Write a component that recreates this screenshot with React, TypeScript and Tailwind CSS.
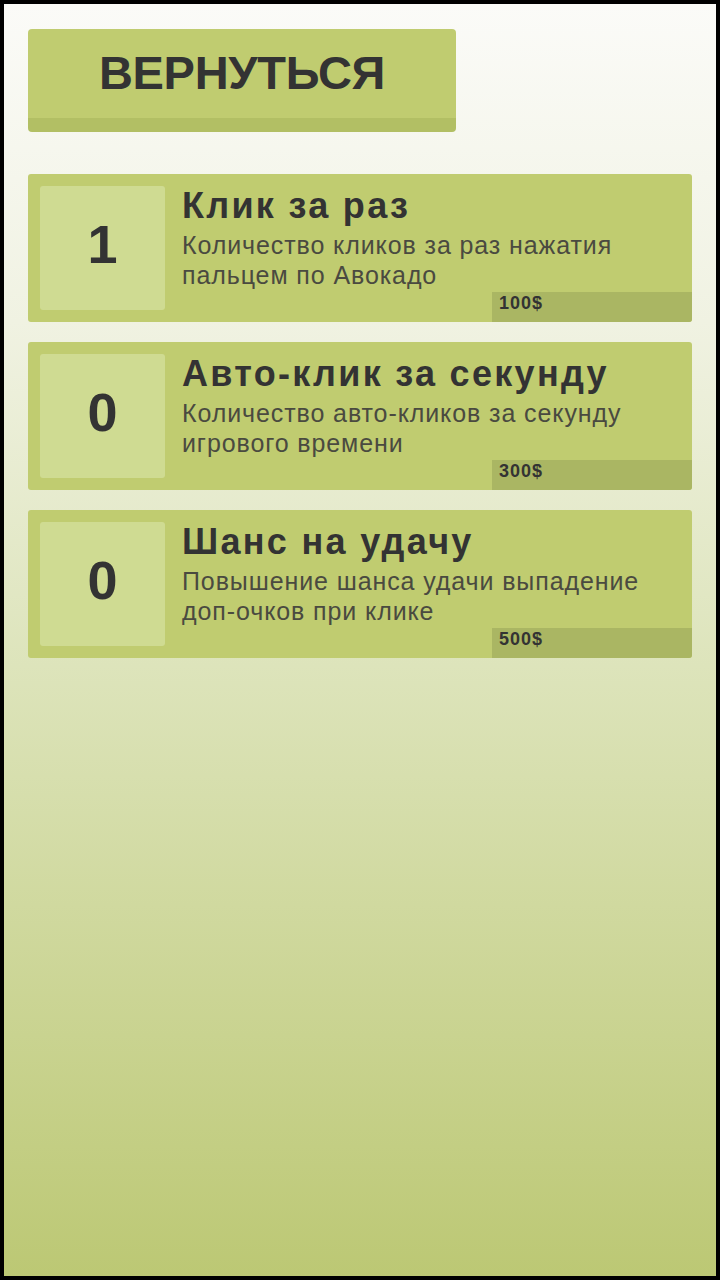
const UPGRADES = [
  {
    level: 1,
    title: "Клик за раз",
    text: "Количество кликов за раз нажатия пальцем по Авокадо",
    price: "100$",
  },
  {
    level: 0,
    title: "Авто-клик за секунду",
    text: "Количество авто-кликов за секунду игрового времени",
    price: "300$",
  },
  {
    level: 0,
    title: "Шанс на удачу",
    text: "Повышение шанса удачи выпадение доп-очков при клике",
    price: "500$",
  },
];

function UpgradeCard({ level, title, text, price }: (typeof UPGRADES)[number]) {
  return (
    <div className="relative flex h-[148px] rounded-[3px] bg-[#c0cc70] p-3">
      <div className="flex h-[124px] w-[125px] shrink-0 items-center justify-center rounded-[3px] bg-[#cfdb92] pb-2 text-[54px] font-bold text-[#333]">
        {level}
      </div>
      <div className="ml-[17px] w-[490px]">
        <h2 className="text-[36px] font-bold leading-[40px] tracking-[2.3px] text-[#333]">{title}</h2>
        <p className="mt-1 text-[25px] leading-[30px] tracking-[0.9px] text-[#4a4a40]">{text}</p>
      </div>
      {/* price tag sits on the bottom-right corner */}
      <div className="absolute bottom-0 right-0 h-[30px] w-[200px] rounded-br-[3px] bg-[#aab663] pl-[7px] pt-[2px] text-[18px] font-bold leading-[18px] tracking-[1px] text-[#333]">
        {price}
      </div>
    </div>
  );
}

export default function App() {
  return (
    <div
      className="h-[1280px] border-4 border-black bg-[linear-gradient(to_bottom,#fbfbf8_0%,#f0f2e2_25%,#dde4bb_52%,#bcc874_100%)] px-6 pt-[25px]"
      style={{ fontFamily: '"Liberation Sans", Arial, sans-serif' }}
    >
      <button className="block h-[103px] w-[428px] rounded-[4px] border-b-[14px] border-[#b2bf64] bg-[#c0cc70] text-[47px] font-bold tracking-[-0.3px] text-[#333]">
        ВЕРНУТЬСЯ
      </button>

      <div className="mt-[42px] flex flex-col gap-5">
        {UPGRADES.map((u) => (
          <UpgradeCard key={u.title} {...u} />
        ))}
      </div>
    </div>
  );
}
